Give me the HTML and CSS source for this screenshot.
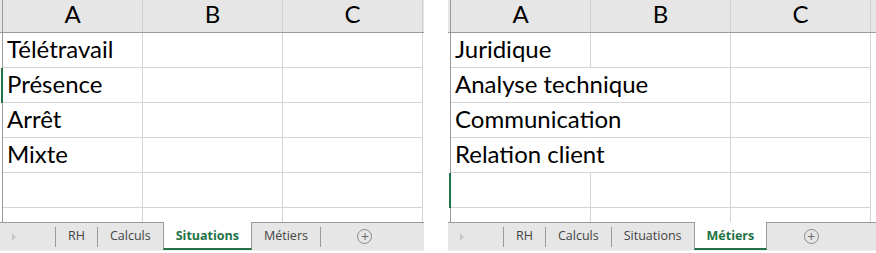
FILE: index.html
```html
<!DOCTYPE html>
<html lang="fr">
<head>
<meta charset="utf-8">
<title>Feuilles</title>
<link rel="stylesheet" href="styles.css">
</head>
<body>
<div class="page">
  <section class="panel panel-left">
    <div class="grid">
      <div class="row head">
        <div class="rh"></div>
        <div class="col">A</div>
        <div class="col">B</div>
        <div class="col">C</div>
      </div>
      <div class="row">
        <div class="rh"></div>
        <div class="cell">Télétravail</div>
        <div class="cell"></div>
        <div class="cell"></div>
      </div>
      <div class="row">
        <div class="rh sel"></div>
        <div class="cell">Présence</div>
        <div class="cell"></div>
        <div class="cell"></div>
      </div>
      <div class="row">
        <div class="rh"></div>
        <div class="cell">Arrêt</div>
        <div class="cell"></div>
        <div class="cell"></div>
      </div>
      <div class="row">
        <div class="rh"></div>
        <div class="cell">Mixte</div>
        <div class="cell"></div>
        <div class="cell"></div>
      </div>
      <div class="row">
        <div class="rh"></div>
        <div class="cell"></div>
        <div class="cell"></div>
        <div class="cell"></div>
      </div>
      <div class="row part">
        <div class="rh"></div>
        <div class="cell"></div>
        <div class="cell"></div>
        <div class="cell"></div>
      </div>
    </div>
    <div class="tabbar">
      <div class="nav"><span class="arrow"></span></div>
      <span class="sep"></span>
      <div class="tab">RH</div>
      <span class="sep"></span>
      <div class="tab">Calculs</div>
      <div class="tab active">Situations</div>
      <div class="tab">Métiers</div>
      <span class="sep"></span>
      <div class="add"><span class="plus">+</span></div>
    </div>
  </section>

  <section class="panel panel-right">
    <div class="grid">
      <div class="row head">
        <div class="rh"></div>
        <div class="col">A</div>
        <div class="col">B</div>
        <div class="col">C</div>
      </div>
      <div class="row">
        <div class="rh"></div>
        <div class="cell">Juridique</div>
        <div class="cell"></div>
        <div class="cell"></div>
      </div>
      <div class="row">
        <div class="rh"></div>
        <div class="cell over">Analyse technique</div>
        <div class="cell"></div>
        <div class="cell"></div>
      </div>
      <div class="row">
        <div class="rh"></div>
        <div class="cell over">Communication</div>
        <div class="cell"></div>
        <div class="cell"></div>
      </div>
      <div class="row">
        <div class="rh"></div>
        <div class="cell over">Relation client</div>
        <div class="cell"></div>
        <div class="cell"></div>
      </div>
      <div class="row">
        <div class="rh sel"></div>
        <div class="cell"></div>
        <div class="cell"></div>
        <div class="cell"></div>
      </div>
      <div class="row part">
        <div class="rh"></div>
        <div class="cell"></div>
        <div class="cell"></div>
        <div class="cell"></div>
      </div>
    </div>
    <div class="tabbar">
      <div class="nav"><span class="arrow"></span></div>
      <span class="sep"></span>
      <div class="tab">RH</div>
      <span class="sep"></span>
      <div class="tab">Calculs</div>
      <span class="sep"></span>
      <div class="tab">Situations</div>
      <div class="tab active">Métiers</div>
      <div class="add"><span class="plus">+</span></div>
    </div>
  </section>
</div>
</body>
</html>
```

FILE: styles.css
```css
* { box-sizing: border-box; }
html, body { margin: 0; padding: 0; background: #ffffff; }
body { width: 876px; height: 253px; overflow: hidden; }

.page {
  display: flex;
  align-items: flex-start;
}

.panel-left { width: 424px; margin-right: 24px; }
.panel-right { flex: 1; }

.grid { display: flex; flex-direction: column; }

.row {
  display: flex;
  height: 35px;
}
.row.head {
  height: 33px;
  background: #e6e6e6;
  border-bottom: 1px solid #9b9b9b;
}
.row.part { height: 14px; }

.rh {
  width: 3px;
  flex: none;
  border-right: 1px solid #9b9b9b;
}
.rh.sel { border-right: 2px solid #217346; }

.col {
  width: 140px;
  flex: none;
  border-right: 1px solid #d0d0d0;
  font-family: "Lato", "Liberation Sans", sans-serif;
  font-size: 24px;
  line-height: 28px;
  text-align: center;
  color: #000;
}

.cell {
  width: 140px;
  flex: none;
  border-right: 1px solid #d4d4d4;
  border-bottom: 1px solid #d4d4d4;
  font-family: "Lato", "Liberation Sans", sans-serif;
  font-size: 24px;
  line-height: 32px;
  padding-left: 4px;
  white-space: nowrap;
  color: #000;
}
.cell.over { border-right-color: transparent; }
.row.part .cell { border-bottom: none; }

.tabbar {
  display: flex;
  align-items: stretch;
  height: 29px;
  background: #e6e6e6;
  border-top: 1px solid #9b9b9b;
  border-bottom: 1px solid #f0f0f0;
  font-family: "Open Sans", "Noto Sans", sans-serif;
  font-size: 12.5px;
  color: #444;
}

.nav {
  width: 55px;
  flex: none;
  display: flex;
  align-items: center;
  padding-left: 12px;
}
.arrow {
  width: 0;
  height: 0;
  border-top: 4px solid transparent;
  border-bottom: 4px solid transparent;
  border-left: 4px solid #c6c6c6;
}

.sep {
  width: 1px;
  height: 20px;
  align-self: center;
  background: #9b9b9b;
  flex: none;
}

.tab {
  padding: 0 12px 3px;
  display: flex;
  align-items: center;
}

.tab.active {
  background: #fff;
  border-left: 1px solid #9b9b9b;
  border-right: 1px solid #9b9b9b;
  border-bottom: 2px solid #217346;
  margin-top: -1px;
  padding-top: 1px;
  padding-bottom: 1px;
  color: #217346;
  font-weight: 700;
}

.add {
  width: 88px;
  display: flex;
  align-items: center;
  justify-content: center;
}
.plus {
  width: 15px;
  height: 15px;
  border: 1px solid #8a8a8a;
  border-radius: 50%;
  display: flex;
  align-items: center;
  justify-content: center;
  font-size: 14px;
  line-height: 1;
  color: #6a6a6a;
}
```
